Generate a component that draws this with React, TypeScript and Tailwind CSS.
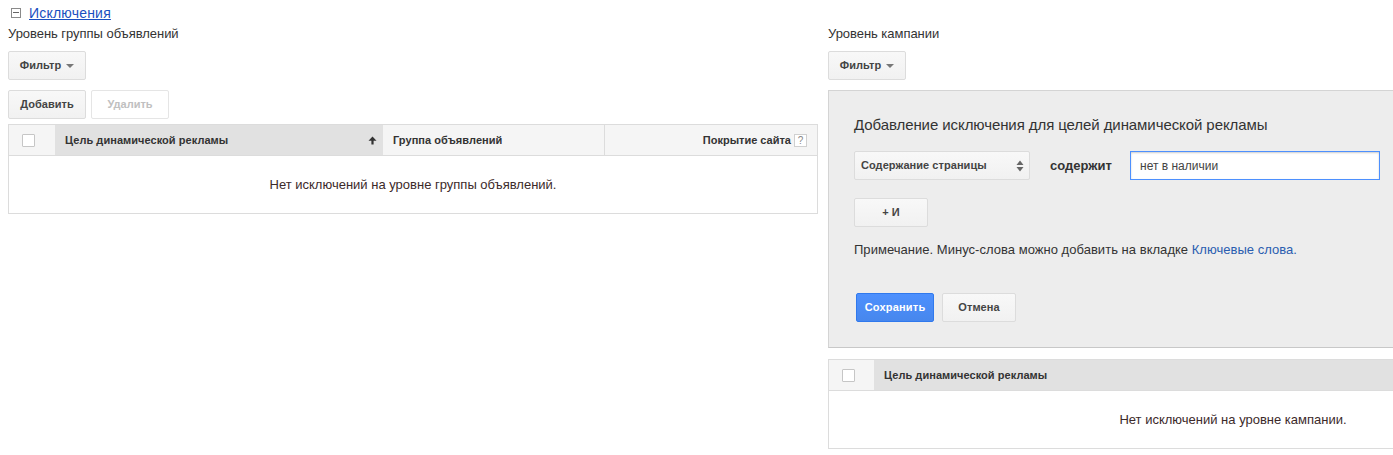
const font = { fontFamily: '"Liberation Sans", Arial, sans-serif' }

const btn = "h-[29px] border border-[#dcdcdc] rounded-[2px] bg-gradient-to-b from-[#f8f8f8] to-[#f1f1f1] text-[11px] font-bold tracking-[0.05px] text-[#444] flex items-center justify-center"

function Checkbox() {
  return <span className="block w-[13px] h-[13px] border border-[#c6c6c6] rounded-[1px] bg-white" />
}

function FilterButton() {
  return (
    <div className={`${btn} w-[78px] gap-[5px]`}>
      <span>Фильтр</span>
      <span className="w-0 h-0 border-x-[4px] border-x-transparent border-t-[4px] border-t-[#777] mt-[1px]" />
    </div>
  )
}

function AdGroupLevel() {
  return (
    <div className="w-[810px] shrink-0">
      <div className="h-[18px] leading-[18px] text-[13px] tracking-[-0.04px] text-[#333]">Уровень группы объявлений</div>
      <div className="mt-[8px]"><FilterButton /></div>
      <div className="mt-[10px] flex gap-[5px]">
        <div className={`${btn} w-[78px]`}>Добавить</div>
        <div className="h-[29px] w-[78px] border border-[#e5e5e5] rounded-[2px] bg-white text-[11px] font-bold text-[#c0c0c0] flex items-center justify-center">Удалить</div>
      </div>
      <div className="mt-[5px] border border-[#dcdcdc] h-[90px]">
        <div className="flex h-[31px] border-b border-[#dcdcdc] bg-[#f5f5f5] text-[11px] font-bold tracking-[0.05px] text-[#333]">
          <div className="w-[46px] flex items-center justify-center pr-[7px]"><Checkbox /></div>
          <div className="w-[328px] bg-[#e1e1e1] flex items-center justify-between pl-[10px] pr-[6px]">
            <span>Цель динамической рекламы</span>
            <svg width="9" height="9" viewBox="0 0 9 9">
              <path d="M4.5 0.5 L8.5 4.8 H5.6 V8.5 H3.4 V4.8 H0.5 Z" fill="#333" />
            </svg>
          </div>
          <div className="w-[222px] border-r border-[#dcdcdc] flex items-center pl-[10px]">Группа объявлений</div>
          <div className="flex-1 flex items-center justify-end pr-[10px] gap-[3px] tracking-normal">
            <span>Покрытие сайта</span>
            <span className="w-[13px] h-[13px] border border-[#d0d0d0] bg-white text-[#888] text-[10px] font-normal leading-[11px] text-center">?</span>
          </div>
        </div>
        <div className="h-[57px] flex items-center justify-center text-[13px] text-[#3c2a2a]">Нет исключений на уровне группы объявлений.</div>
      </div>
    </div>
  )
}

function CampaignLevel() {
  return (
    <div className="w-[810px] shrink-0">
      <div className="h-[18px] leading-[18px] text-[13px] tracking-[-0.04px] text-[#333]">Уровень кампании</div>
      <div className="mt-[8px]"><FilterButton /></div>
      <div className="mt-[10px] h-[258px] bg-[#ededed] border border-[#d4d4d4] border-b-[#c8c8c8] pl-[25px] pt-[25px]">
        <div className="h-[18px] leading-[18px] text-[15px] tracking-[-0.08px] text-[#333]">Добавление исключения для целей динамической рекламы</div>
        <div className="mt-[17px] flex items-center">
          <div className={`${btn} w-[176px] !justify-between pl-[6px] pr-[5px]`}>
            <span>Содержание страницы</span>
            <svg width="8" height="12" viewBox="0 0 8 12">
              <path d="M4 0.5 L7.5 5 H0.5 Z M0.5 7 H7.5 L4 11.5 Z" fill="#666" />
            </svg>
          </div>
          <span className="ml-[20px] w-[80px] text-[13px] font-bold text-[#333]">содержит</span>
          <div className="w-[250px] h-[29px] border border-[#4d90fe] bg-white pl-[9px] flex items-center text-[12px] text-[#444] shadow-[inset_0_1px_2px_rgba(0,0,0,0.2)]">нет в наличии</div>
        </div>
        <div className={`${btn} mt-[18px] w-[74px]`}>+ И</div>
        <div className="mt-[14px] h-[18px] leading-[18px] text-[13px] tracking-[0.03px] text-[#333]">
          Примечание. Минус-слова можно добавить на вкладке <span className="text-[#2a5db0]">Ключевые слова.</span>
        </div>
        <div className="mt-[34px] ml-[2px] flex gap-[8px]">
          <div className="h-[29px] w-[78px] border border-[#3079ed] rounded-[2px] bg-gradient-to-b from-[#4d90fe] to-[#4787ed] text-[11px] font-bold tracking-[0.2px] text-white flex items-center justify-center">Сохранить</div>
          <div className={`${btn} w-[74px]`}>Отмена</div>
        </div>
      </div>
      <div className="mt-[11px] border border-[#dcdcdc] h-[90px]">
        <div className="flex h-[31px] border-b border-[#dcdcdc] bg-[#e1e1e1] text-[11px] font-bold tracking-[0.05px] text-[#333]">
          <div className="w-[45px] bg-[#f5f5f5] flex items-center justify-center pr-[7px]"><Checkbox /></div>
          <div className="flex-1 flex items-center pl-[10px]">Цель динамической рекламы</div>
        </div>
        <div className="h-[57px] flex items-center justify-center text-[13px] text-[#3c2a2a]">Нет исключений на уровне кампании.</div>
      </div>
    </div>
  )
}

export default function App() {
  return (
    <div style={font} className="w-[1393px] h-[455px] overflow-hidden bg-white">
      <div className="h-[25px] pl-[11px] flex items-center gap-[8px]">
        <span className="w-[10px] h-[10px] border border-[#8a8a8a] flex items-center justify-center">
          <span className="block w-[6px] h-[1px] bg-[#666]" />
        </span>
        <span className="mt-[2px] text-[14px] tracking-[0.2px] text-[#1a4fc0] underline">Исключения</span>
      </div>
      <div className="flex gap-[10px] pl-[8px]">
        <AdGroupLevel />
        <CampaignLevel />
      </div>
    </div>
  )
}
